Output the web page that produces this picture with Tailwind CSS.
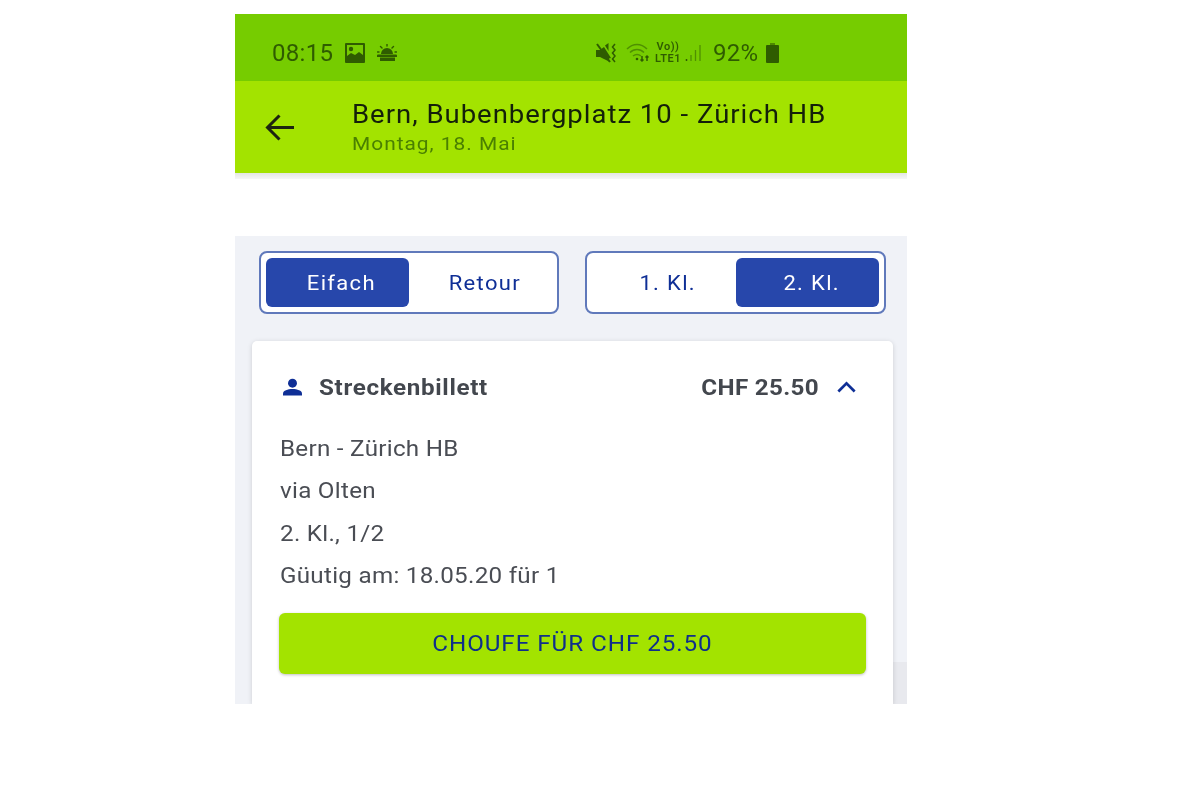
<!DOCTYPE html>
<html lang="de">
<head>
    <meta charset="UTF-8">
    <title>Streckenbillett</title>
    <script src="https://cdn.jsdelivr.net/npm/@tailwindcss/browser@4"></script>
</head>
<body class="bg-white font-['Roboto',sans-serif]">
    <div class="w-[1200px] h-[800px] pt-[14px] pl-[235px]">
        <div class="w-[672px] h-[690px] flex flex-col overflow-hidden blur-[0.5px]">
            <!-- Status bar -->
            <div class="h-[67px] shrink-0 bg-[#76cc00] flex items-center pl-[37px] pt-[11px] text-[#2f5c00]">
                <span class="text-[24px] leading-none tracking-[0.3px] w-[62px]">08:15</span>
                <svg class="ml-[11px]" width="20" height="20" viewBox="0 0 20 20"><path fill="#2f5c00" fill-rule="evenodd" d="M1 0h18a1 1 0 0 1 1 1v18a1 1 0 0 1-1 1H1a1 1 0 0 1-1-1V1a1 1 0 0 1 1-1zm1 2v11l4-3 4 2 4-3 4 3V2z"/><circle cx="6" cy="6" r="2.200" fill="#2f5c00"/></svg>
                <svg class="ml-[12px]" width="20" height="18" viewBox="0 0 20 18"><path fill="#2f5c00" d="M4 10a6 6 0 0 1 12 0zM1 10.500h18a1 1 0 0 1 1 1V13H0v-1.500a1 1 0 0 1 1-1zM3 13.500h15v3.500H3z"/><path stroke="#2f5c00" stroke-width="1.400" stroke-linecap="round" d="M10 0v2M3.500 2.500 5 4M16.500 2.500 15 4M0.500 8H2M18 8h1.500"/></svg>
                <svg class="ml-[199px]" width="21" height="21" viewBox="0 0 21 21"><path fill="#2f5c00" d="M0 7h4l4-3 7 11-2 .5v3l-9-4.500H0zM9 2.500 12.500 0v8z"/><path stroke="#2f5c00" stroke-width="2" d="M1 1l13 18"/><path stroke="#2f5c00" stroke-width="1.500" fill="none" d="M19 1l-2.500 3 2.500 3-2.500 3 2.500 3-2.500 3 2.500 3"/></svg>
                <svg class="ml-[9px]" width="25" height="20" viewBox="0 0 25 20" fill="none" stroke-width="1.500"><path stroke="#4f9000" d="M1 6c6-6 14-6 20 0M4 9.500c4-4 10-4 14 0M7 13c2.500-2 5.500-2 8 0"/><circle cx="11" cy="16" r="1.300" fill="#2f5c00"/><path stroke="#2f5c00" d="M16 13v5M14.500 16.500l1.500 1.500 1.500-1.500M21 18v-5M19.500 14.500l1.500-1.500 1.500 1.500"/></svg>
                <div class="ml-[4px] w-[26px] text-[11px] tracking-[0.5px] font-semibold leading-[12px] text-center"><div>Vo))</div><div>LTE1</div></div>
                <svg class="ml-[4px]" width="18" height="20" viewBox="0 0 18 20"><path stroke="#2f5c00" stroke-width="1.500" d="M1.500 18v-2"/><path stroke="#4f9000" stroke-width="1.300" d="M6 18v-6M10.500 18V7M15 18V2"/></svg>
                <span class="ml-[10px] text-[24px] leading-none tracking-[0.2px] w-[47px]">92%</span>
                <svg class="ml-[6px]" width="13" height="20" viewBox="0 0 13 20"><path fill="#4f8a00" d="M4 0h5v3H4z"/><path fill="#2f5c00" d="M1 2h11a1 1 0 0 1 1 1v16a1 1 0 0 1-1 1H1a1 1 0 0 1-1-1V3a1 1 0 0 1 1-1z"/></svg>
            </div>

            <!-- Header -->
            <div class="h-[92px] shrink-0 bg-[#a3e300] flex items-center relative">
                <svg class="ml-[30px]" width="29" height="27" viewBox="0 0 29 27" fill="none" stroke="#1c2410" stroke-width="3"><path d="M29 13.500H3M14.500 1.500 2.500 13.500l12 12"/></svg>
                <div class="ml-[58px] origin-left scale-x-[1.1]">
                    <div class="text-[25px] leading-[30px] tracking-[0.9px] text-[#14200a] whitespace-nowrap">Bern, Bubenbergplatz 10 - Zürich HB</div>
                    <div class="mt-[3px] text-[19px] leading-[22px] tracking-[0.9px] text-[#4a8000]">Montag, 18. Mai</div>
                </div>
            </div>
            <div class="h-[6px] shrink-0 bg-gradient-to-b from-[#e4e6e4] to-[#f6f7f7]"></div>
            <div class="h-[57px] shrink-0 bg-white"></div>

            <!-- Content -->
            <div class="flex-1 min-h-0 bg-[#f0f2f7] relative">
                <div class="absolute right-0 bottom-0 w-[14px] h-[42px] bg-[#e8e9ee]"></div>

                <!-- Toggles -->
                <div class="flex gap-[26px] pl-[24px] pt-[15px]">
                    <div class="w-[300px] h-[63px] bg-white border-2 border-[#6079bb] rounded-[8px] p-[5px] flex text-[20px] tracking-[1.200px]">
                        <div class="w-[143px] rounded-[6px] bg-[#2747ab] text-white flex items-center justify-center pl-[8px]"><span class="scale-x-[1.1]">Eifach</span></div>
                        <div class="w-[143px] text-[#0f2f96] flex items-center justify-center pl-[8px]"><span class="scale-x-[1.1]">Retour</span></div>
                    </div>
                    <div class="w-[301px] h-[63px] bg-white border-2 border-[#6079bb] rounded-[8px] p-[5px] flex text-[20px] tracking-[1.200px]">
                        <div class="w-[144px] text-[#0f2f96] flex items-center justify-center pl-[8px]"><span class="scale-x-[1.1]">1. Kl.</span></div>
                        <div class="w-[143px] rounded-[6px] bg-[#2747ab] text-white flex items-center justify-center pl-[8px]"><span class="scale-x-[1.1]">2. Kl.</span></div>
                    </div>
                </div>

                <!-- Ticket card -->
                <div class="relative mt-[27px] ml-[17px] w-[641px] h-[363px] bg-white rounded-t-[5px] shadow-[0_1px_5px_rgba(0,0,0,0.15)] px-[28px] pt-[32px]">
                    <div class="flex items-center h-[28px] text-[22px] font-bold text-[#43474e]">
                        <svg class="ml-[3px]" width="19" height="18" viewBox="0 0 20 18"><circle cx="10" cy="5" r="4.700" fill="#0f2f96"/><path fill="#0f2f96" d="M0 18v-2c0-3.500 5-5 10-5s10 1.500 10 5v2z"/></svg>
                        <span class="ml-[17px] tracking-[0.6px] origin-left scale-x-[1.1]">Streckenbillett</span>
                        <span class="ml-auto tracking-[0.3px] origin-right scale-x-[1.1]">CHF 25.50</span>
                        <svg class="ml-[18px] mr-[9px]" width="19" height="12" viewBox="0 0 21 13" fill="none" stroke="#0f2f96" stroke-width="3"><path d="M1.500 11.500 10.500 2.500l9 9"/></svg>
                    </div>
                    <div class="mt-[27px] text-[22px] leading-[42.300px] tracking-[0.25px] text-[#4a4d54] origin-left scale-x-[1.1]">
                        <div>Bern - Zürich HB</div>
                        <div>via Olten</div>
                        <div>2. Kl., 1/2</div>
                        <div>Güutig am: 18.05.20 für 1</div>
                    </div>
                    <div class="mt-[16px] -mx-px h-[61px] rounded-[6px] bg-[#a3e300] shadow-[0_1px_3px_rgba(0,0,0,0.25)] flex items-center justify-center text-[22px] tracking-[0.85px] text-[#0f2f8a]"><span class="scale-x-[1.1]">CHOUFE FÜR CHF 25.50</span></div>
                </div>
            </div>
        </div>
    </div>
</body>
</html>
